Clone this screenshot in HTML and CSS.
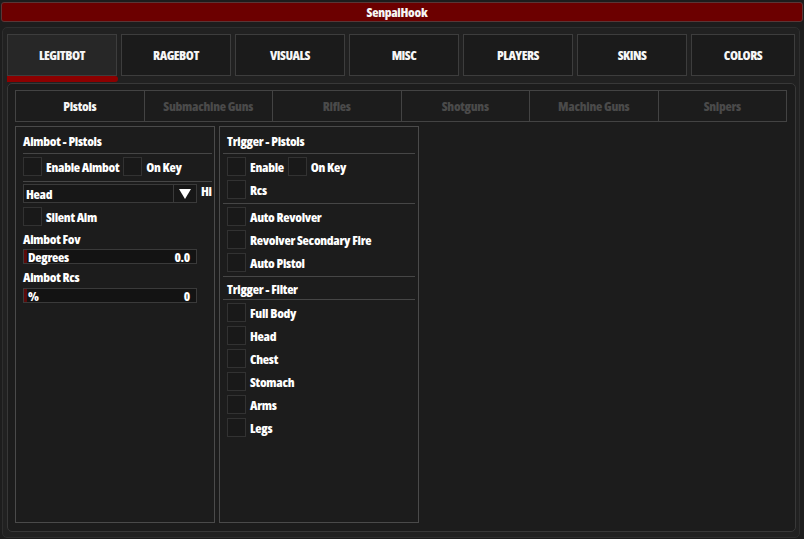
FILE: index.html
```html
<!DOCTYPE html>
<html>
<head>
<meta charset="utf-8">
<link rel="stylesheet" href="styles.css">
</head>
<body>
<div class="titlebar">SenpaiHook</div>
<div class="frame">
  <div class="tabs">
    <div class="tab active">LEGITBOT</div>
    <div class="tab">RAGEBOT</div>
    <div class="tab">VISUALS</div>
    <div class="tab">MISC</div>
    <div class="tab">PLAYERS</div>
    <div class="tab">SKINS</div>
    <div class="tab last">COLORS</div>
  </div>
  <div class="redbar"></div>
  <div class="panel">
    <div class="subtabs">
      <div class="subtab active">Pistols</div>
      <div class="subtab">Submachine Guns</div>
      <div class="subtab">Rifles</div>
      <div class="subtab">Shotguns</div>
      <div class="subtab">Machine Guns</div>
      <div class="subtab">Snipers</div>
    </div>
    <div class="groups">
      <div class="group">
        <div class="gtitle">Aimbot - Pistols</div>
        <div class="sep"></div>
        <div class="row first"><span class="cb"></span><span class="lbl">Enable Aimbot</span><span class="cb cb2"></span><span class="lbl">On Key</span></div>
        <div class="sep sep-gap5"></div>
        <div class="ddrow">
          <div class="dropdown"><span class="ddtext">Head</span><span class="ddarrow"><svg width="12" height="10" viewBox="0 0 12 10"><polygon points="0,0 12,0 6,10" fill="#ffffff"/></svg></span></div>
          <span class="hi">Hi</span>
        </div>
        <div class="row"><span class="cb"></span><span class="lbl">Silent Aim</span></div>
        <div class="slabel">Aimbot Fov</div>
        <div class="slider"><span class="fill"></span><span class="sname">Degrees</span><span class="sval">0.0</span></div>
        <div class="slabel">Aimbot Rcs</div>
        <div class="slider"><span class="fill"></span><span class="sname">%</span><span class="sval">0</span></div>
      </div>
      <div class="group group-r">
        <div class="gtitle">Trigger - Pistols</div>
        <div class="sep"></div>
        <div class="row first"><span class="cb"></span><span class="lbl">Enable</span><span class="cb cb2"></span><span class="lbl">On Key</span></div>
        <div class="row"><span class="cb"></span><span class="lbl">Rcs</span></div>
        <div class="sep sep-gap4"></div>
        <div class="row first"><span class="cb"></span><span class="lbl">Auto Revolver</span></div>
        <div class="row"><span class="cb"></span><span class="lbl">Revolver Secondary Fire</span></div>
        <div class="row"><span class="cb"></span><span class="lbl">Auto Pistol</span></div>
        <div class="sep sep-gap4"></div>
        <div class="gtitle gtitle2">Trigger - Filter</div>
        <div class="sep"></div>
        <div class="row first"><span class="cb"></span><span class="lbl">Full Body</span></div>
        <div class="row"><span class="cb"></span><span class="lbl">Head</span></div>
        <div class="row"><span class="cb"></span><span class="lbl">Chest</span></div>
        <div class="row"><span class="cb"></span><span class="lbl">Stomach</span></div>
        <div class="row"><span class="cb"></span><span class="lbl">Arms</span></div>
        <div class="row"><span class="cb"></span><span class="lbl">Legs</span></div>
      </div>
    </div>
  </div>
</div>
</body>
</html>
```

FILE: styles.css
```css
* { box-sizing: border-box; }
html, body {
  margin: 0;
  padding: 0;
}
body {
  width: 804px;
  height: 539px;
  overflow: hidden;
  background: #1d1d1d;
  color: #ffffff;
  font-family: "Open Sans", "DejaVu Sans Condensed", sans-serif;
  font-stretch: 75%;
  font-weight: 800;
  font-size: 13px;
  letter-spacing: -0.3px;
}
.titlebar {
  margin: 2px 1px 0 1px;
  height: 20px;
  border: 1px solid #5a3636;
  border-radius: 3px;
  background: #6c0000;
  text-align: center;
  line-height: 18px;
  font-size: 13px;
  padding-right: 10px;
  color: #f6f6f6;
}
.frame {
  margin: 5px 4px 0 2px;
  height: 511px;
  border: 1px solid #2e2e2e;
  border-radius: 5px;
  background: #212121;
  padding: 6px 0 0 4px;
}
.tabs {
  display: flex;
  gap: 4px;
  height: 42px;
}
.tab {
  width: 110px;
  height: 42px;
  border: 1px solid #3d3d3d;
  background: #1b1b1b;
  display: flex;
  align-items: center;
  justify-content: center;
  font-size: 13px;
  letter-spacing: -0.5px;
  color: #f6f6f6;
}
.tab.active { background: #272727; }
.tab.last { width: 104px; }
.redbar {
  width: 111px;
  height: 6px;
  background: #8c0000;
  border-radius: 0 3px 3px 0;
}
.panel {
  margin-top: 1px;
  width: 789px;
  height: 449px;
  border: 1px solid #383838;
  border-radius: 5px;
  background: #1c1c1c;
  padding: 6px 0 0 7px;
}
.subtabs {
  display: flex;
  width: 772px;
  height: 32px;
}
.subtab {
  flex: 1;
  border: 1px solid #434343;
  margin-left: -1px;
  display: flex;
  align-items: center;
  justify-content: center;
  color: #4a4a4a;
}
.subtab:first-child { margin-left: 0; }
.subtab.active { color: #f6f6f6; }
.groups {
  display: flex;
  gap: 4px;
  margin-top: 4px;
}
.group {
  width: 200px;
  height: 397px;
  border: 1px solid #4a4a4a;
  padding: 0 2px 0 7px;
  display: flex;
  flex-direction: column;
}
.group-r { padding-right: 3px; }
.gtitle {
  height: 26px;
  line-height: 29px;
}
.gtitle2 {
  height: 22px;
  line-height: 24px;
}
.sep {
  height: 1px;
  background: #464646;
  flex: none;
}
.group-r .sep { margin-left: -4px; }
.sep-gap5 { margin-top: 5px; }
.sep-gap4 { margin-top: 4px; }
.row {
  display: flex;
  align-items: center;
  height: 19px;
  margin-top: 4px;
  flex: none;
}
.row.first { margin-top: 3px; }
.cb {
  width: 19px;
  height: 19px;
  border: 1px solid #323232;
  background: #191919;
  margin-right: 4px;
  flex: none;
}
.cb2 { margin-left: 4px; }
.lbl {
  white-space: nowrap;
  line-height: 19px;
  padding-top: 1px;
}
.ddrow {
  display: flex;
  margin-top: 2px;
  height: 19px;
  flex: none;
}
.dropdown {
  width: 174px;
  height: 19px;
  border: 1px solid #3a3a3a;
  background: #171717;
  display: flex;
  align-items: center;
}
.ddtext {
  flex: 1;
  padding-left: 2px;
  line-height: 17px;
  padding-top: 1px;
}
.ddarrow {
  width: 23px;
  height: 17px;
  border-left: 1px solid #3a3a3a;
  display: flex;
  align-items: center;
  justify-content: center;
}
.ddarrow svg { display: block; }
.hi {
  margin-left: 4px;
  line-height: 14px;
}
.slabel {
  height: 23px;
  line-height: 26px;
  flex: none;
}
.slabel + .slider + .slabel { height: 24px; }
.slider {
  width: 174px;
  height: 15px;
  border: 1px solid #3a3a3a;
  background: #131313;
  display: flex;
  align-items: center;
  flex: none;
}
.fill {
  width: 3px;
  height: 13px;
  background: #5a0b0b;
}
.sname {
  flex: 1;
  padding-left: 1px;
  line-height: 13px;
  padding-top: 1px;
}
.sval {
  padding-right: 6px;
  line-height: 13px;
  padding-top: 1px;
}
```
